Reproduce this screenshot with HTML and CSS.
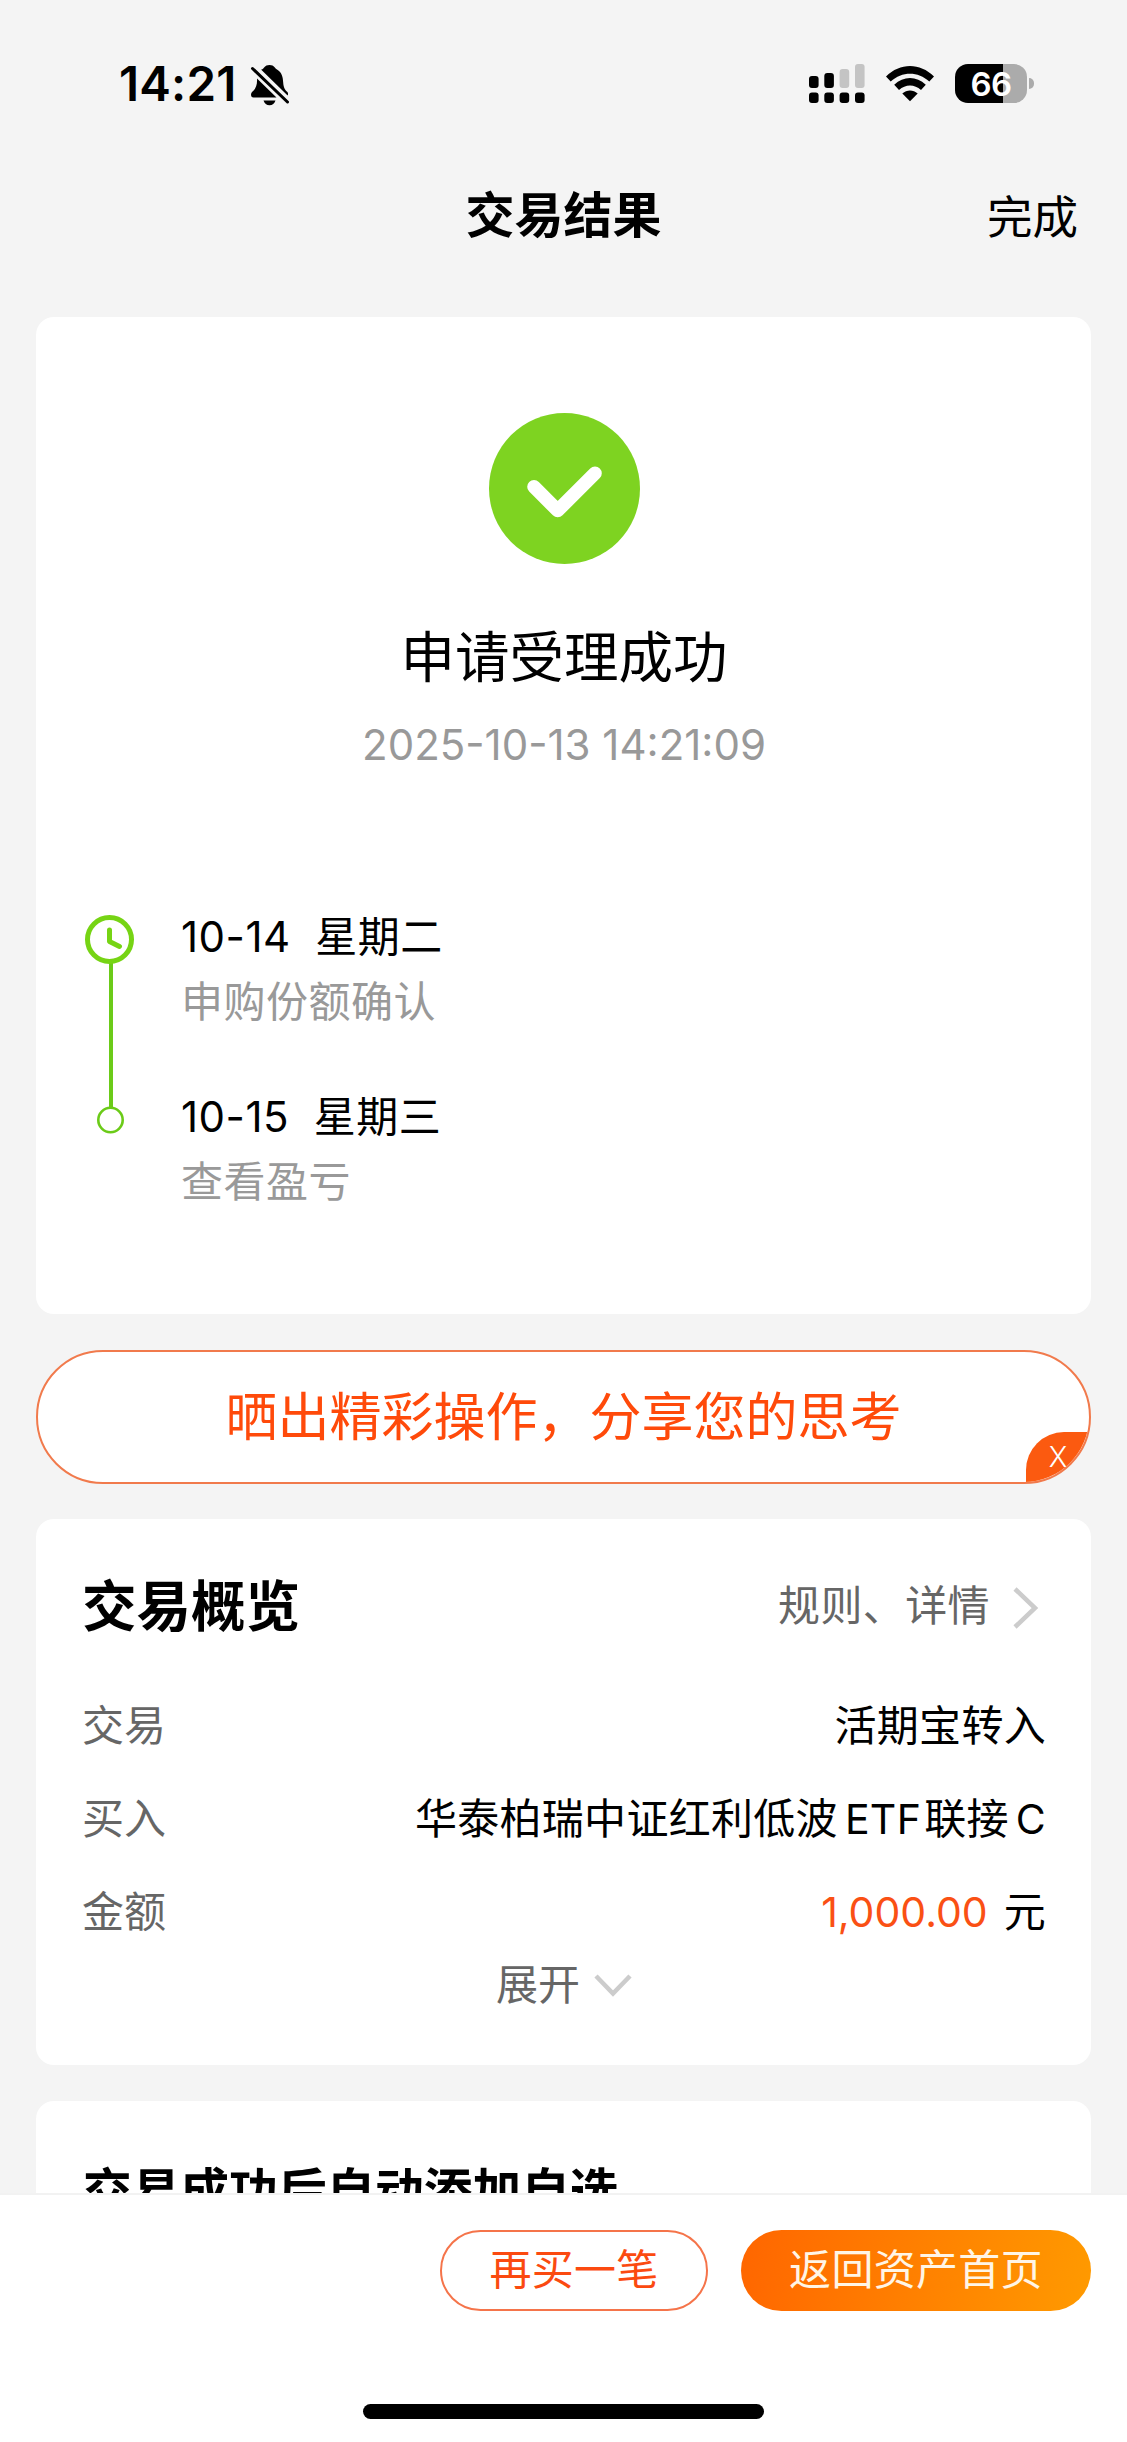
FILE: index.html
```html
<!DOCTYPE html>
<html lang="zh-CN">
<head>
<meta charset="utf-8">
<title>交易结果</title>
<link rel="stylesheet" href="styles.css">
</head>
<body>
<div class="screen">
  <header class="status-bar">
    <div class="status-left">
      <span class="clock">14:21</span>
      <svg class="bell" width="40" height="42" viewBox="0 0 40 42">
        <path d="M12 5.500C14 4.500 14.500 1 19.500 1s5.500 3.500 7.500 4.500c5 3 6 8 6.200 13 .2 5 2 7.500 4.200 9.500.8.800.8 2.500.2 3.600L11 5.500Z"/>
        <path d="M7 14.500 26.500 33.500H3.500C.5 33.500.5 29.500 2 28 5 25.500 7.500 22 7 14.500Z"/>
        <path d="M13.500 36.500h12c-1 3-3 4.700-6 4.700s-5-1.700-6-4.700Z"/>
        <path class="slash" d="M2.500 4.500 37.500 38"/>
      </svg>
    </div>
    <div class="status-right">
      <svg width="57" height="40" viewBox="0 0 57 40">
        <rect x="0" y="12" width="9.600" height="12" rx="3"/>
        <rect x="15.300" y="9" width="9.600" height="15" rx="3"/>
        <rect class="dim" x="30.600" y="5" width="9.600" height="19" rx="3"/>
        <rect class="dim" x="46" y="0" width="9.600" height="24" rx="3"/>
        <rect x="0" y="28.500" width="9.600" height="10.500" rx="3"/>
        <rect x="15.300" y="28.500" width="9.600" height="10.500" rx="3"/>
        <rect x="30.600" y="28.500" width="9.600" height="10.500" rx="3"/>
        <rect x="46" y="28.500" width="9.600" height="10.500" rx="3"/>
      </svg>
      <svg class="wifi" width="48" height="36" viewBox="0 0 48 36">
        <path d="M0 10.500C14-3.500 34-3.500 48 10.500L43.300 15.500C32 5 16 5 4.700 15.500Z"/>
        <path d="M8.200 18.800C17.500 9.800 30.500 9.800 39.800 18.800L35 24C28.500 18 19.500 18 13 24Z"/>
        <path d="M16.300 27.500C21 23.500 27 23.500 31.700 27.500L24 35.200Z"/>
      </svg>
      <div class="battery"><span>66</span></div>
      <div class="battery-cap"></div>
    </div>
  </header>

  <nav class="nav">
    <span></span>
    <h1>交易结果</h1>
    <a class="done">完成</a>
  </nav>

  <main class="content">
    <section class="card result">
      <svg class="success" width="151" height="151" viewBox="0 0 151 151">
        <circle cx="75.500" cy="75.500" r="75.500"/>
        <path d="M45 73.800 68.700 97.500 106 60.200"/>
      </svg>
      <h2>申请受理成功</h2>
      <p class="time">2025-10-13 14:21:09</p>
      <div class="timeline">
        <svg class="track" width="50" height="220" viewBox="0 0 50 220">
          <path class="line" d="M26 48V193"/>
          <circle class="ring" cx="24.500" cy="24.500" r="22"/>
          <path class="hands" d="M24.500 15V26.500L34.500 31.500"/>
          <circle class="dot" cx="25.500" cy="205" r="12.200"/>
        </svg>
        <div class="steps">
          <div class="step"><p>10-14&nbsp; 星期二</p><p class="note">申购份额确认</p></div>
          <div class="step"><p>10-15&nbsp; 星期三</p><p class="note">查看盈亏</p></div>
        </div>
      </div>
    </section>

    <section class="share">
      <span>晒出精彩操作，分享您的思考</span>
      <b class="close">X</b>
    </section>

    <section class="card overview">
      <div class="head">
        <h3>交易概览</h3>
        <a class="rules">规则、详情
          <svg width="26" height="42" viewBox="0 0 26 42"><path d="M2 2 22 21 2 40"/></svg>
        </a>
      </div>
      <div class="row"><span>交易</span><span class="value">活期宝转入</span></div>
      <div class="row"><span>买入</span><span class="value fund">华泰柏瑞中证红利低波<i>ETF</i>联接<i>C</i></span></div>
      <div class="row"><span>金额</span><span class="value"><em>1,000.00</em>元</span></div>
      <div class="expand">展开
        <svg width="38" height="24" viewBox="0 0 38 24"><path d="M2 2 19 19.500 36 2"/></svg>
      </div>
    </section>

    <section class="card auto-add">
      <h3>交易成功后自动添加自选</h3>
    </section>
  </main>

  <footer class="footer">
    <div class="actions">
      <a class="btn again">再买一笔</a>
      <a class="btn home">返回资产首页</a>
    </div>
    <div class="home-indicator"></div>
  </footer>
</div>
</body>
</html>
```
FILE: styles.css
```css
* { box-sizing: border-box; margin: 0; padding: 0; }
body {
  background: #f4f4f4;
  font-family: Inter, "Noto Sans CJK SC", sans-serif;
  color: #000;
  font-size: 42px;
  line-height: 60px;
}
svg { display: block; flex: none; }
i, em { font-style: normal; }
.screen { width: 1127px; height: 2442px; display: flex; flex-direction: column; overflow: hidden; }

.status-bar { height: 167px; flex: none; display: flex; justify-content: space-between; align-items: flex-start; padding: 64px 93px 0 119px; }
.status-left { display: flex; }
.clock { font-size: 47.500px; font-weight: 600; line-height: 40px; width: 131px; letter-spacing: 0.200px; }
.slash { fill: none; stroke: #000; stroke-width: 3; stroke-linecap: round; }
.status-right { display: flex; }
.dim { fill: #c4c4c4; }
.wifi { margin: 2px 21px 0 20px; }
.battery { width: 72px; height: 39px; border-radius: 13px; background: linear-gradient(90deg, #000 48px, #ababab 48px); color: #fff; font-size: 33px; font-weight: 600; line-height: 40px; text-align: center; letter-spacing: -0.500px; }
.battery-cap { width: 5px; height: 11px; margin: 14px 0 0 2px; background: #ababab; border-radius: 0 5px 5px 0; }

.nav { height: 150px; flex: none; display: grid; grid-template-columns: 1fr auto 1fr; padding: 19px 49px 0; line-height: 60px; }
.nav h1 { font-size: 49px; font-weight: 700; }
.done { text-align: right; font-size: 45.500px; padding-top: 2px; }

.content { flex: 1; min-height: 0; overflow: hidden; padding: 0 36px; display: flex; flex-direction: column; }
.card { background: #fff; border-radius: 18px; flex: none; width: 1055px; }
.result { height: 997px; padding: 96px 48px 0 49px; display: flex; flex-direction: column; align-items: center; }
.success circle { fill: #7ed321; }
.success path { fill: none; stroke: #fff; stroke-width: 13.600; stroke-linecap: round; stroke-linejoin: round; }
.result h2 { font-size: 54.500px; font-weight: 400; margin-top: 63px; }
.time { color: #999; margin-top: 28px; }
.timeline { align-self: stretch; display: flex; margin-top: 140px; }
.track { fill: none; }
.line { stroke: #6bcb18; stroke-width: 4; }
.ring { stroke: #76d414; stroke-width: 5; }
.hands { stroke: #76d414; stroke-width: 5; stroke-linecap: round; stroke-linejoin: round; }
.dot { stroke: #6bcb18; stroke-width: 2.600; fill: #fff; }
.steps { margin: -8px 0 0 46px; letter-spacing: 0.500px; }
.step { height: 180px; white-space: nowrap; }
.note { color: #999; margin-top: 5px; }

.share { position: relative; flex: none; width: 1055px; height: 134px; margin: 36px 0 35px; border: 2px solid #f17a4c; border-radius: 67px; background: #fff; color: #ff4a0a; font-size: 52px; text-align: center; line-height: 132px; overflow: hidden; }
.close { position: absolute; right: -2px; bottom: -2px; width: 65px; height: 52px; border-radius: 38px 0 0 0; background: #fb5a10; color: #fff; font-size: 28px; font-weight: 300; line-height: 50px; padding-right: 1px; }

.overview { height: 546px; padding: 57px 45px 0 46px; }
.head { display: flex; justify-content: space-between; height: 90px; }
h3 { font-size: 54.500px; font-weight: 700; }
.rules { display: flex; color: #666; gap: 23px; padding-right: 7px; letter-spacing: 0.400px; }
.rules svg { margin-top: 11px; }
.rules path, .expand path { fill: none; stroke: #ccc; stroke-width: 4.500; }
.row { display: flex; justify-content: space-between; color: #666; height: 93px; padding-top: 30px; }
.value { color: #000; letter-spacing: 0.300px; }
.fund i { margin: 0 3px 0 7px; font-size: 41px; }
.fund i:last-child { margin-right: 0; }
.value em { color: #fa5014; margin-right: 16px; font-size: 41px; letter-spacing: 0; }
.expand { display: flex; justify-content: center; color: #666; gap: 14px; padding-top: 10px; }
.expand svg { margin-top: 19px; }
.auto-add { margin-top: 36px; height: 300px; padding: 61px 47px; }
.auto-add h3 { font-size: 48.700px; }

.footer { flex: none; height: 249px; background: #fff; border-top: 2px solid #f2f2f2; padding: 35px 36px 0; }
.actions { display: flex; justify-content: flex-end; gap: 33px; }
.btn { height: 81px; border-radius: 41px; line-height: 80px; text-align: center; letter-spacing: 0.300px; }
.again { width: 268px; border: 2px solid #f5744a; color: #fb4a10; line-height: 76px; }
.home { width: 350px; color: #fff5e6; background: linear-gradient(100deg, #ff6600, #ff9a00); }
.home-indicator { width: 401px; height: 15px; border-radius: 8px; background: #000; margin: 93px auto 0; }
```
